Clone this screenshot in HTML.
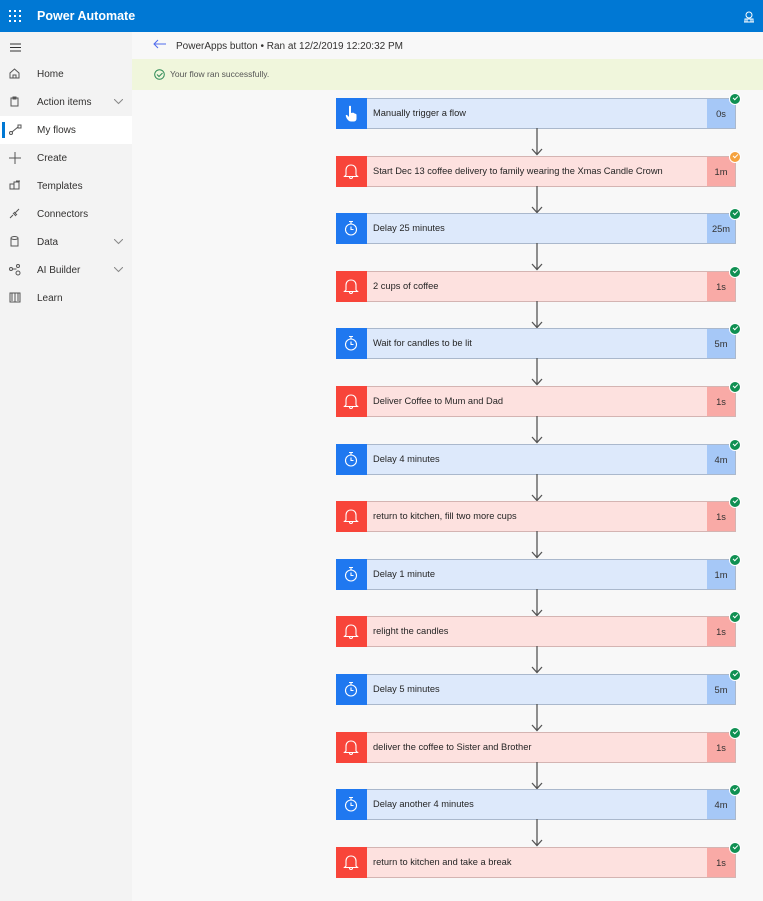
<!DOCTYPE html>
<html><head><meta charset="utf-8"><style>
*{margin:0;padding:0;box-sizing:border-box}
body{width:763px;height:901px;overflow:hidden;font-family:"Liberation Sans",sans-serif;background:#f8f8f8;position:relative;color:#323130}
.top{position:absolute;left:0;top:0;width:763px;height:32px;background:#0078d4;color:#fff}
.top .t{position:absolute;left:37px;top:9px;font-size:12.5px;font-weight:bold}
.side{position:absolute;left:0;top:32px;width:132px;height:869px;background:#f3f3f3}
.nav{position:absolute;left:0;width:132px;height:28px;font-size:10px;line-height:30px}
.nav span{position:absolute;left:37px}
.nav svg{position:absolute;left:9px;top:8px}
.nav .chev{left:114px;top:11px}
.sel{background:#fff}
.sel:before{content:"";position:absolute;left:2px;top:6px;width:3px;height:16px;background:#0078d4}
.sub{position:absolute;left:132px;top:32px;width:631px;height:28px;font-size:10px;color:#323130}
.ban{position:absolute;left:132px;top:59px;width:631px;height:31px;background:#f0f6dc;font-size:8.5px;color:#555}
.card{position:absolute;left:336px;width:400px;height:31px;border:1px solid #aab8cc;background:#dde9fb;font-size:9.3px}
.card.r{background:#fde1df;border-color:#d4b4b2}
.card .ic{position:absolute;left:-1px;top:-1px;width:31px;height:31px;background:#1f78f0}
.card.r .ic{background:#f8453a}
.card .ic svg{position:absolute;left:7px;top:7px}
.card .tx{position:absolute;left:36px;top:9px;color:#252525}
.card .d{position:absolute;right:0;top:0;width:28px;height:29px;background:#a6c8f7;text-align:center;line-height:30px}
.card.r .d{background:#f9aaa6}
.ck{position:absolute;right:-6px;top:-6px;width:12px;height:12px;border-radius:50%;background:#0f9052;border:1px solid #fff}
.ck.o{background:#f5a23d}
.ck:after{content:"";position:absolute;left:3px;top:2px;width:4px;height:2px;border-left:1.3px solid #fff;border-bottom:1.3px solid #fff;transform:rotate(-45deg)}
.ar{position:absolute;left:530px;width:14px}
</style></head><body>
<div class="top">
<svg style="position:absolute;left:9px;top:10px" width="12" height="12"><g fill="#fff"><rect x="0" y="0" width="2" height="2"/><rect x="5" y="0" width="2" height="2"/><rect x="10" y="0" width="2" height="2"/><rect x="0" y="5" width="2" height="2"/><rect x="5" y="5" width="2" height="2"/><rect x="10" y="5" width="2" height="2"/><rect x="0" y="10" width="2" height="2"/><rect x="5" y="10" width="2" height="2"/><rect x="10" y="10" width="2" height="2"/></g></svg>
<div class="t">Power Automate</div>
<svg style="position:absolute;left:743px;top:11px" width="12" height="12" fill="none" stroke="#fff" stroke-width="1"><circle cx="6" cy="4" r="3"/><path d="M1 11h10M2 11V8h8v3M4 8v3M8 8v3"/></svg>
</div>
<div class="side">
<svg style="position:absolute;left:10px;top:11px" width="11" height="9" stroke="#333" stroke-width="1"><path d="M0 1h11M0 4.5h11M0 8h11"/></svg>
<div class="nav" style="top:28px"><svg width="11" height="11" fill="none" stroke="#555"><path d="M1 5L5.5 1 10 5V10H1z M4 10V7h3v3"/></svg><span>Home</span></div>
<div class="nav" style="top:56px"><svg width="11" height="11" fill="none" stroke="#555"><path d="M2 2h7v8H2z M4 1h3v2H4z"/></svg><span>Action items</span><svg class="chev" width="9" height="6" fill="none" stroke="#888"><path d="M0 0l4.5 4.5L9 0"/></svg></div>
<div class="nav sel" style="top:84px"><svg width="13" height="11" fill="none" stroke="#555"><circle cx="2" cy="9" r="1.5"/><rect x="9" y="1" width="3" height="3"/><path d="M3 8l6-5"/></svg><span>My flows</span></div>
<div class="nav" style="top:112px"><svg width="12" height="12" stroke="#555"><path d="M6 0v12M0 6h12"/></svg><span>Create</span></div>
<div class="nav" style="top:140px"><svg width="12" height="11" fill="none" stroke="#555"><path d="M1 4h4v5H1z M5 2h5v7H5z M7 1h4"/></svg><span>Templates</span></div>
<div class="nav" style="top:168px"><svg width="12" height="11" fill="none" stroke="#555"><path d="M1 10l3-3M4 5l3 3M6 5l4-4M5 4l3 3"/></svg><span>Connectors</span></div>
<div class="nav" style="top:196px"><svg width="11" height="11" fill="none" stroke="#555"><ellipse cx="5.5" cy="2" rx="3.5" ry="1.5"/><path d="M2 2v8h7V2"/></svg><span>Data</span><svg class="chev" width="9" height="6" fill="none" stroke="#888"><path d="M0 0l4.5 4.5L9 0"/></svg></div>
<div class="nav" style="top:224px"><svg width="12" height="12" fill="none" stroke="#555"><circle cx="2" cy="5" r="1.5"/><circle cx="9" cy="2" r="1.5"/><circle cx="9" cy="9" r="2"/><path d="M3.5 5h4"/></svg><span>AI Builder</span><svg class="chev" width="9" height="6" fill="none" stroke="#888"><path d="M0 0l4.5 4.5L9 0"/></svg></div>
<div class="nav" style="top:252px"><svg width="12" height="11" fill="none" stroke="#555"><path d="M1 1h10v9H1z M6 1v9 M3 1v8M9 1v8"/></svg><span>Learn</span></div>
</div>
<div class="sub">
<svg style="position:absolute;left:21px;top:7px" width="13" height="10" fill="none" stroke="#4f6bed" stroke-width="1"><path d="M13 5H1M5 1L1 5l4 4"/></svg>
<span style="position:absolute;left:44px;top:9px">PowerApps button • Ran at 12/2/2019 12:20:32 PM</span>
</div>
<div class="ban">
<svg style="position:absolute;left:22px;top:10px" width="11" height="11" fill="none" stroke="#2e8b57"><circle cx="5.5" cy="5.5" r="4.8"/><path d="M3 5.5l2 2 3.5-3.5"/></svg>
<span style="position:absolute;left:38px;top:10px">Your flow ran successfully.</span>
</div>

<svg width="0" height="0" style="position:absolute"><defs>
<g id="hand"><path d="M6 1.5c0-1 2-1 2 0V8l1-.2c1-.2 2 0 2.5.5v.3c1-.2 2 .5 2 1.2v4c0 1.5-1 2.7-2.5 2.7h-3C6 16.5 4.8 15 3.5 13l-.7-2c-.3-1 .7-1.600 1.5-.8L6 12z" fill="#fff"/></g>
<g id="bell"><path d="M3 12V7c0-3 2-5 5-5s5 2 5 5v5l1.5 1.5h-13z M6.5 14a1.5 1.5 0 0 0 3 0" fill="none" stroke="#fff" stroke-width="1.1"/></g>
<g id="timer"><circle cx="8" cy="9.5" r="5.5" fill="none" stroke="#fff" stroke-width="1.1"/><path d="M6 1.5h4M8 1.5v2.5M8 6.5v3h2.5" fill="none" stroke="#fff" stroke-width="1.1"/></g>
<g id="arr"><path d="M7 0v27M2 21l5 5.5 5-5.5" fill="none" stroke="#555" stroke-width="1.3"/></g>
</defs></svg>

<div class="card" style="top:98px"><div class="ic"><svg width="17" height="17"><use href="#hand"/></svg></div><div class="tx">Manually trigger a flow</div><div class="d">0s</div><div class="ck"></div></div>
<svg class="ar" style="top:128px" height="28"><use href="#arr"/></svg>
<div class="card r" style="top:156px"><div class="ic"><svg width="17" height="17"><use href="#bell"/></svg></div><div class="tx">Start Dec 13 coffee delivery to family wearing the Xmas Candle Crown</div><div class="d">1m</div><div class="ck o"></div></div>
<svg class="ar" style="top:186px" height="28"><use href="#arr"/></svg>
<div class="card" style="top:213px"><div class="ic"><svg width="17" height="17"><use href="#timer"/></svg></div><div class="tx">Delay 25 minutes</div><div class="d">25m</div><div class="ck"></div></div>
<svg class="ar" style="top:243px" height="28"><use href="#arr"/></svg>
<div class="card r" style="top:271px"><div class="ic"><svg width="17" height="17"><use href="#bell"/></svg></div><div class="tx">2 cups of coffee</div><div class="d">1s</div><div class="ck"></div></div>
<svg class="ar" style="top:301px" height="28"><use href="#arr"/></svg>
<div class="card" style="top:328px"><div class="ic"><svg width="17" height="17"><use href="#timer"/></svg></div><div class="tx">Wait for candles to be lit</div><div class="d">5m</div><div class="ck"></div></div>
<svg class="ar" style="top:358px" height="28"><use href="#arr"/></svg>
<div class="card r" style="top:386px"><div class="ic"><svg width="17" height="17"><use href="#bell"/></svg></div><div class="tx">Deliver Coffee to Mum and Dad</div><div class="d">1s</div><div class="ck"></div></div>
<svg class="ar" style="top:416px" height="28"><use href="#arr"/></svg>
<div class="card" style="top:444px"><div class="ic"><svg width="17" height="17"><use href="#timer"/></svg></div><div class="tx">Delay 4 minutes</div><div class="d">4m</div><div class="ck"></div></div>
<svg class="ar" style="top:474px" height="28"><use href="#arr"/></svg>
<div class="card r" style="top:501px"><div class="ic"><svg width="17" height="17"><use href="#bell"/></svg></div><div class="tx">return to kitchen, fill two more cups</div><div class="d">1s</div><div class="ck"></div></div>
<svg class="ar" style="top:531px" height="28"><use href="#arr"/></svg>
<div class="card" style="top:559px"><div class="ic"><svg width="17" height="17"><use href="#timer"/></svg></div><div class="tx">Delay 1 minute</div><div class="d">1m</div><div class="ck"></div></div>
<svg class="ar" style="top:589px" height="28"><use href="#arr"/></svg>
<div class="card r" style="top:616px"><div class="ic"><svg width="17" height="17"><use href="#bell"/></svg></div><div class="tx">relight the candles</div><div class="d">1s</div><div class="ck"></div></div>
<svg class="ar" style="top:646px" height="28"><use href="#arr"/></svg>
<div class="card" style="top:674px"><div class="ic"><svg width="17" height="17"><use href="#timer"/></svg></div><div class="tx">Delay 5 minutes</div><div class="d">5m</div><div class="ck"></div></div>
<svg class="ar" style="top:704px" height="28"><use href="#arr"/></svg>
<div class="card r" style="top:732px"><div class="ic"><svg width="17" height="17"><use href="#bell"/></svg></div><div class="tx">deliver the coffee to Sister and Brother</div><div class="d">1s</div><div class="ck"></div></div>
<svg class="ar" style="top:762px" height="28"><use href="#arr"/></svg>
<div class="card" style="top:789px"><div class="ic"><svg width="17" height="17"><use href="#timer"/></svg></div><div class="tx">Delay another 4 minutes</div><div class="d">4m</div><div class="ck"></div></div>
<svg class="ar" style="top:819px" height="28"><use href="#arr"/></svg>
<div class="card r" style="top:847px"><div class="ic"><svg width="17" height="17"><use href="#bell"/></svg></div><div class="tx">return to kitchen and take a break</div><div class="d">1s</div><div class="ck"></div></div>
</body></html>
